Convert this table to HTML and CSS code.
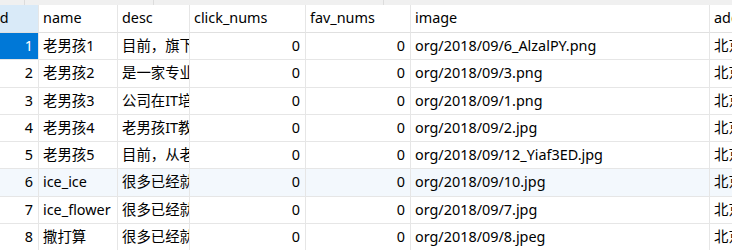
FILE: index.html
```html
<!DOCTYPE html>
<html lang="zh">
<head>
    <meta charset="UTF-8">
    <title>course_org</title>
    <link rel="stylesheet" href="styles.css">
</head>
<body>
    <div class="toolbar">
        <span class="tick t1"></span>
        <span class="tick t2"></span>
        <span class="tick t3"></span>
    </div>
    <div class="grid">
        <table>
            <colgroup>
                <col class="c-id">
                <col class="c-name">
                <col class="c-desc">
                <col class="c-click">
                <col class="c-fav">
                <col class="c-image">
                <col class="c-addr">
            </colgroup>
            <thead>
                <tr>
                    <th class="id-head">id</th>
                    <th>name</th>
                    <th>desc</th>
                    <th>click_nums</th>
                    <th>fav_nums</th>
                    <th>image</th>
                    <th>address</th>
                </tr>
            </thead>
            <tbody>
                <tr>
                    <td class="num selected">1</td>
                    <td>老男孩1</td>
                    <td>目前，旗下拥有</td>
                    <td class="num">0</td>
                    <td class="num">0</td>
                    <td>org/2018/09/6_AlzalPY.png</td>
                    <td>北京市</td>
                </tr>
                <tr>
                    <td class="num">2</td>
                    <td>老男孩2</td>
                    <td>是一家专业的</td>
                    <td class="num">0</td>
                    <td class="num">0</td>
                    <td>org/2018/09/3.png</td>
                    <td>北京市</td>
                </tr>
                <tr>
                    <td class="num">3</td>
                    <td>老男孩3</td>
                    <td>公司在IT培训</td>
                    <td class="num">0</td>
                    <td class="num">0</td>
                    <td>org/2018/09/1.png</td>
                    <td>北京市</td>
                </tr>
                <tr>
                    <td class="num">4</td>
                    <td>老男孩4</td>
                    <td>老男孩IT教育</td>
                    <td class="num">0</td>
                    <td class="num">0</td>
                    <td>org/2018/09/2.jpg</td>
                    <td>北京市</td>
                </tr>
                <tr>
                    <td class="num">5</td>
                    <td>老男孩5</td>
                    <td>目前，从老男孩</td>
                    <td class="num">0</td>
                    <td class="num">0</td>
                    <td>org/2018/09/12_Yiaf3ED.jpg</td>
                    <td>北京市</td>
                </tr>
                <tr class="hover">
                    <td class="num">6</td>
                    <td>ice_ice</td>
                    <td>很多已经就业</td>
                    <td class="num">0</td>
                    <td class="num">0</td>
                    <td>org/2018/09/10.jpg</td>
                    <td>北京市</td>
                </tr>
                <tr>
                    <td class="num">7</td>
                    <td>ice_flower</td>
                    <td>很多已经就业</td>
                    <td class="num">0</td>
                    <td class="num">0</td>
                    <td>org/2018/09/7.jpg</td>
                    <td>北京市</td>
                </tr>
                <tr>
                    <td class="num">8</td>
                    <td>撒打算</td>
                    <td>很多已经就业</td>
                    <td class="num">0</td>
                    <td class="num">0</td>
                    <td>org/2018/09/8.jpeg</td>
                    <td>北京市</td>
                </tr>
            </tbody>
        </table>
    </div>
</body>
</html>
```
FILE: styles.css
```css
* {
    margin: 0;
    padding: 0;
    box-sizing: border-box;
}

body {
    font-family: 'Noto Sans', 'Noto Sans CJK SC', sans-serif;
    font-size: 14.4px;
    color: #000;
    background: #fff;
    width: 732px;
    height: 250px;
    overflow: hidden;
}

/* полоска сверху */
.toolbar {
    height: 5px;
    background: #f0f0f0;
    position: relative;
}

.tick {
    position: absolute;
    top: 0;
    width: 1px;
    height: 5px;
    background: #dcdcdc;
}

.t1 { left: 24px; }
.t2 { left: 153px; }
.t3 { left: 383px; }

.grid {
    overflow: hidden;
}

table {
    table-layout: fixed;
    border-collapse: separate;
    border-spacing: 0;
    width: 780px;
}

.c-id { width: 39px; }
.c-name { width: 79px; }
.c-desc { width: 72px; }
.c-click { width: 116px; }
.c-fav { width: 105px; }
.c-image { width: 299px; }
.c-addr { width: 70px; }

th, td {
    height: 27.3px;
    padding: 0 4px 0 4px;
    border-right: 1px solid #e6e6e6;
    border-bottom: 1px solid #e6e6e6;
    white-space: nowrap;
    overflow: hidden;
    text-align: left;
    font-weight: normal;
    vertical-align: middle;
    line-height: 1;
}

th {
    height: 28px;
    border-bottom-color: #e0e0e0;
}

.id-head {
    background: #d9eaf8;
    text-indent: -8px;
}

td.num {
    text-align: right;
    padding-right: 5px;
}

td.selected {
    background: #0078d7;
    color: #fff;
}

tr.hover td {
    background: #f3f8fd;
}
```
